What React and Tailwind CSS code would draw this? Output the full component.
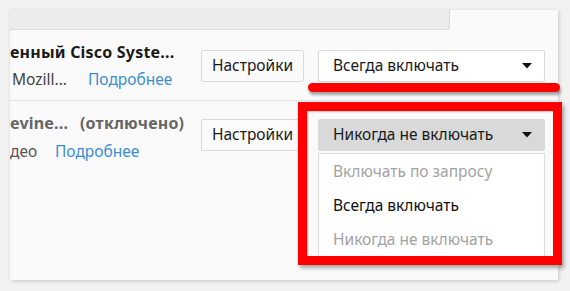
import React from "react";

const font = { fontFamily: '"Noto Sans", "Open Sans", sans-serif' };

const Arrow = () => (
  <svg width="10" height="6" viewBox="0 0 10 6" className="shrink-0">
    <path d="M0 0 L10 0 L5 5.5 Z" fill="#111" />
  </svg>
);

const SettingsButton = () => (
  <button className="w-[103px] h-[32px] shrink-0 border border-[#dadada] bg-[#fbfbfb] rounded-[2px] text-[15.5px] text-[#1a1a1a]">
    Настройки
  </button>
);

const Select = ({ value, open }) => (
  <div
    className={`w-[227px] h-[32px] shrink-0 flex items-center justify-between pl-[14px] pr-[12px] border rounded-[2px] text-[15.5px] text-[#1a1a1a] ${
      open ? "bg-[#d9d9d9] border-[#d9d9d9]" : "bg-white border-[#dadada]"
    }`}
  >
    <span>{value}</span>
    <Arrow />
  </div>
);

const options = [
  { label: "Включать по запросу", muted: true },
  { label: "Всегда включать", muted: false },
  { label: "Никогда не включать", muted: true },
];

export default function App() {
  return (
    <div style={font} className="relative w-[570px] h-[291px] overflow-hidden bg-[#f2f2f2] pt-[10px] pl-[10px]">
      <div className="w-[548px] h-[270px] bg-[#fafafa] shadow-[1px_1px_4px_rgba(0,0,0,0.18)] flex flex-col">
        {/* top strip */}
        <div className="w-[440px] h-[20px] shrink-0 bg-[#ececec] border-b border-r border-[#dcdcdc] rounded-br-[3px]" />

        {/* row 1 */}
        <div className="h-[71px] shrink-0 flex items-start border-b border-[#e2e2e2]">
          <div className="w-[191px] shrink-0 mt-[12px] flex flex-col gap-[7px] overflow-hidden">
            <div className="h-[20px] leading-[20px] text-[16px] font-bold tracking-[0.2px] text-[#1a1a1a] whitespace-nowrap">
              енный Cisco Syste...
            </div>
            <div className="h-[20px] leading-[20px] text-[15.5px] whitespace-nowrap flex">
              <span className="text-[#444] ml-[2px] w-[76px]">Mozill...</span>
              <span className="text-[#3b8ed0]">Подробнее</span>
            </div>
          </div>
          <div className="mt-[20px] flex gap-[14px]">
            <SettingsButton />
            <Select value="Всегда включать" />
          </div>
        </div>

        {/* row 2 */}
        <div className="flex items-start">
          <div className="w-[191px] shrink-0 mt-[12px] flex flex-col gap-[8px] overflow-hidden">
            <div className="h-[20px] leading-[20px] text-[16px] font-bold tracking-[0.2px] text-[#666] whitespace-nowrap flex">
              <span className="w-[70px]">evine...</span>
              <span>(отключено)</span>
            </div>
            <div className="h-[20px] leading-[20px] text-[15.5px] whitespace-nowrap flex">
              <span className="text-[#555] w-[45px]">део</span>
              <span className="text-[#3b8ed0]">Подробнее</span>
            </div>
          </div>
          <div className="mt-[18px] flex gap-[14px]">
            <SettingsButton />
            <Select value="Никогда не включать" open />
          </div>
        </div>
      </div>

      {/* dropdown list */}
      <div className="absolute left-[318px] top-[153px] w-[227px] bg-white border border-[#dcdcdc] py-[1px] text-[15.5px]">
        {options.map((o) => (
          <div
            key={o.label}
            className={`h-[34px] flex items-center pl-[14px] ${o.muted ? "text-[#a3a3a3]" : "text-[#111]"}`}
          >
            {o.label}
          </div>
        ))}
      </div>

      {/* red highlights */}
      <div className="absolute left-[308px] top-[83px] w-[252px] h-[9px] rounded-full bg-[#ff0000] shadow-[1px_3px_3px_rgba(0,0,0,0.35)]" />
      <div className="absolute left-[298px] top-[102px] w-[264px] h-[163px] border-[9px] border-[#ff0000] shadow-[2px_3px_4px_rgba(0,0,0,0.35),inset_1px_1px_2px_rgba(0,0,0,0.25)]" />
    </div>
  );
}
